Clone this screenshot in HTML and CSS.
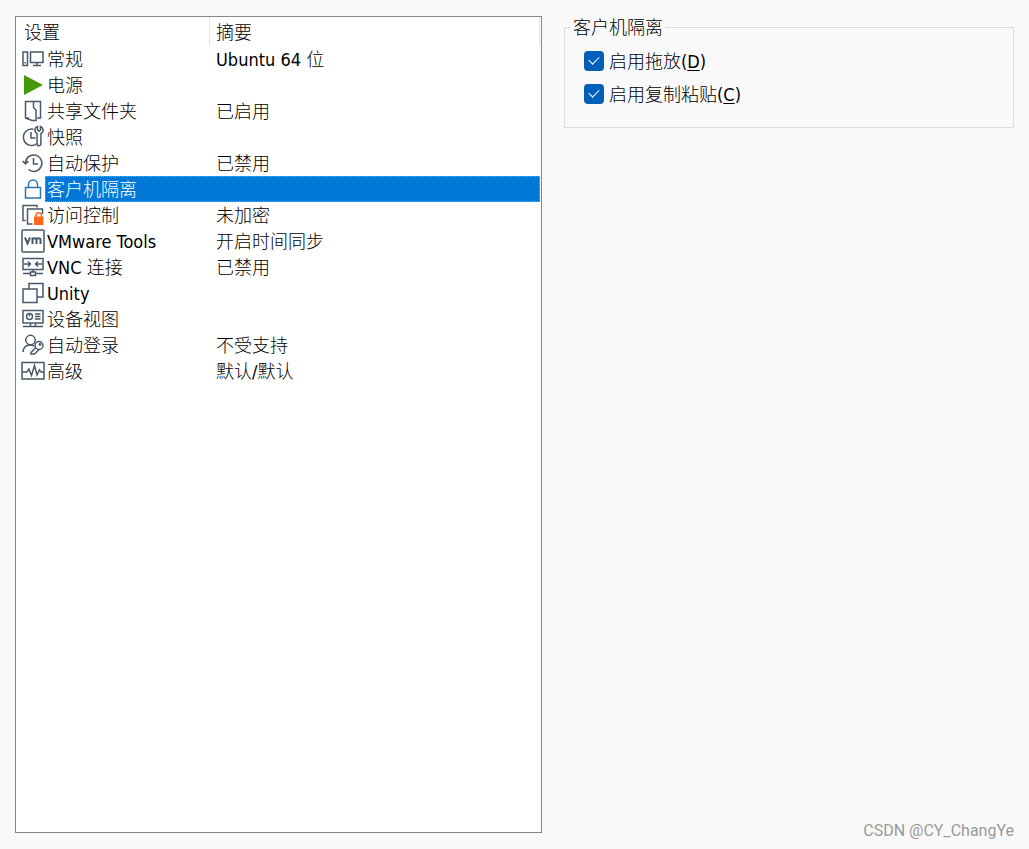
FILE: index.html
```html
<!DOCTYPE html>
<html lang="zh-CN">
<head>
<meta charset="utf-8">
<title>虚拟机设置</title>
<link rel="stylesheet" href="styles.css">
</head>
<body>
<main class="layout">
  <section class="panel">
    <table class="settings">
      <colgroup><col class="col-icon"><col class="col-name"><col></colgroup>
      <thead>
        <tr><th colspan="2" class="head-name">设置</th><th class="head-summary">摘要</th></tr>
      </thead>
      <tbody>
        <tr><td><svg class="icon" viewBox="0 0 24 24"><path d="M2 5h4.500v13.500H2zM9.500 5h12.500v10.500H9.500zM16 15.500v3M12 18.500h8M4.200 15v1.500"/></svg></td><td>常规</td><td>Ubuntu 64 位</td></tr>
        <tr><td><svg class="icon" viewBox="0 0 24 24"><path class="play" d="M3 2l19 10L3 22z"/></svg></td><td>电源</td><td></td></tr>
        <tr><td><svg class="icon" viewBox="0 0 24 24"><path d="M8 19H4.500V2.500h15V19H16M12.500 2.500v6l2.500 2.500v10.500h-4L4.500 19"/></svg></td><td>共享文件夹</td><td>已启用</td></tr>
        <tr><td><svg class="icon" viewBox="0 0 24 24"><path d="M12.500 4.300A8.200 8.200 0 1 0 16 18.500M10 7v6h4.500"/><path d="M16.500 1.500v3.500l1.500 1 1.500-1V1.500a3.800 3.800 0 0 1 .500 7L19.800 19a1.800 1.800 0 0 1-3.600 0L16 8.500a3.800 3.800 0 0 1 .500-7z"/></svg></td><td>快照</td><td></td></tr>
        <tr><td><svg class="icon" viewBox="0 0 24 24"><path d="M4.500 12.500a8.200 8.200 0 1 1 3 6M1.500 10l3 3 3-3M12.500 7v6H17"/></svg></td><td>自动保护</td><td>已禁用</td></tr>
        <tr class="selected"><td><svg class="icon" viewBox="0 0 24 24"><path class="lock" d="M4.500 10.500h15v10.500h-15zM7.500 10.500V7.500a4.500 4.500 0 0 1 9 0v3"/></svg></td><td colspan="2">客户机隔离</td></tr>
        <tr><td><svg class="icon" viewBox="0 0 24 24"><path d="M4.500 17.500H2V2.500h14v2M11.500 21H6.500V6h15V11"/><path class="badge" d="M13 13.500h9.500V22H13z"/><path class="badge-line" d="M15 14v-1.500a2.700 2.700 0 0 1 5.500 0v1.500"/></svg></td><td>访问控制</td><td>未加密</td></tr>
        <tr><td><svg class="icon" viewBox="0 0 24 24"><rect x="1" y="1" width="22" height="22" rx="1"/><path class="vm" d="M4 8.500l2.500 6 2.500-6M11.500 15V8.500M11.500 11c0-2.500 4-2.500 4 0v4M15.500 11c0-2.500 4-2.500 4 0v4"/></svg></td><td>VMware Tools</td><td>开启时间同步</td></tr>
        <tr><td><svg class="icon" viewBox="0 0 24 24"><path d="M2 3.500h20v11H2zM2 18.500h7.500M14.500 18.500H22M9.500 17h5v3.500h-5zM12 14.500V17M3 9h6.500M7 6.500L9.500 9 7 11.500M21 9h-6.500M17 6.500L14.500 9l2.500 2.500"/></svg></td><td>VNC 连接</td><td>已禁用</td></tr>
        <tr><td><svg class="icon" viewBox="0 0 24 24"><path d="M2 8h14V21.500H2zM8 8V2.500h14V16h-6"/></svg></td><td>Unity</td><td></td></tr>
        <tr><td><svg class="icon" viewBox="0 0 24 24"><path d="M2 3.500h20v12.500H2zM9.500 16v3.500M14.500 16v3.500M2 19.500h20M14 7h5.500M14 9.500h5.500M14 12h5.500M8.500 6v3.500"/><circle cx="8.500" cy="9.500" r="3"/></svg></td><td>设备视图</td><td></td></tr>
        <tr><td><svg class="icon" viewBox="0 0 24 24"><circle cx="9.500" cy="7" r="4.700"/><path d="M2 19c.5-5 3-7 7-7 1.500 0 3 .4 4 1.200"/><circle cx="18" cy="12.500" r="4"/><path d="M15 14.500l-5 5v1.500h3.500l4.500-4.500"/><circle cx="19" cy="11.500" r=".7"/></svg></td><td>自动登录</td><td>不受支持</td></tr>
        <tr><td><svg class="icon" viewBox="0 0 24 24"><path d="M1 3.500h22v16.500H1zM1 13h5l2-3 2.500 6.500 3-10L16 16l2.500-5 1.500 2h3"/></svg></td><td>高级</td><td>默认/默认</td></tr>
      </tbody>
    </table>
  </section>
  <fieldset class="group">
    <legend>客户机隔离</legend>
    <label class="option"><input type="checkbox" accesskey="d" checked><span>启用拖放(<u>D</u>)</span></label>
    <label class="option"><input type="checkbox" accesskey="c" checked><span>启用复制粘贴(<u>C</u>)</span></label>
  </fieldset>
</main>
<div class="watermark">CSDN @CY_ChangYe</div>
</body>
</html>
```
FILE: styles.css
```css
* { box-sizing: border-box; }
body {
  margin: 0;
  background: #f9f9f9;
  color: #000;
  font: 300 18px/24px "DejaVu Sans Condensed", "Noto Sans CJK SC", sans-serif;
}
.layout {
  display: grid;
  grid-template-columns: 527fr 450fr;
  gap: 22px;
  align-items: start;
  min-height: 100vh;
  padding: 16px 15px;
}
.panel {
  align-self: stretch;
  background: #fff;
  border: 1px solid #828790;
  padding-right: 1px;
}
.settings {
  width: 100%;
  table-layout: fixed;
  border-collapse: separate;
  border-spacing: 0;
}
.col-icon { width: 29px; }
.col-name { width: 165px; }
.settings th {
  height: 29px;
  padding: 4px 0 1px 8px;
  font-weight: 300;
  text-align: left;
  border-right: 1px solid #e5e5e5;
}
.settings .head-summary { padding-left: 6px; }
.settings td {
  height: 26px;
  padding: 2px 0 0 6px;
  white-space: nowrap;
}
.settings td:first-child { padding: 1px 0 1px 5px; }
.settings td:nth-child(2) { padding-left: 2px; }
.settings .selected td + td {
  padding: 1px 0 0 1px;
  color: #fff;
  background: #0078d7;
  border: 1px dotted #ff8728;
  line-height: 23px;
}
.icon {
  display: block;
  width: 24px;
  height: 24px;
  fill: none;
  stroke: #485969;
  stroke-width: 1.5;
}
.icon .play { fill: #449a0c; stroke: none; }
.icon .lock { stroke: #2774ae; }
.icon .badge { fill: #ff681c; stroke: none; }
.icon .badge-line { stroke: #ff681c; }
.icon .vm { stroke-width: 2; }
.group {
  min-width: 0;
  margin: 0;
  padding: 6px 19px 17px;
  border: 1px solid #dcdcdc;
}
.group legend {
  margin-left: -13px;
  padding: 2px 2px 0;
  line-height: 20px;
}
.option {
  display: flex;
  align-items: center;
  gap: 5px;
  height: 33px;
}
.option span { padding-top: 2px; }
.option input {
  appearance: none;
  width: 20px;
  height: 20px;
  margin: 0;
  border-radius: 4px;
  background: #005fb8;
  display: grid;
  place-items: center;
}
.option input:checked::before {
  content: "";
  width: 9px;
  height: 5px;
  margin-bottom: 3px;
  border: solid #fff;
  border-width: 0 0 1px 1px;
  transform: rotate(-45deg);
}
.option u { text-underline-offset: 2px; }
.watermark {
  position: absolute;
  right: 15px;
  bottom: 8px;
  color: #999;
  font: 400 16px/20px Roboto, sans-serif;
}
```
